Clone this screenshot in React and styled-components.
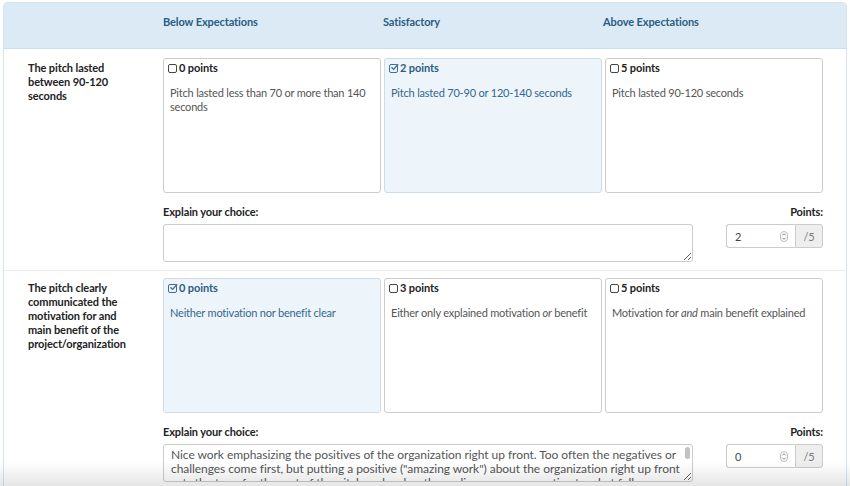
import React from "react";
import styled, { createGlobalStyle } from "styled-components";

const GlobalStyle = createGlobalStyle`
  html, body {
    margin: 0;
    padding: 0;
    background: #fff;
    overflow: hidden;
  }
  body {
    font-family: Lato, "Open Sans", sans-serif;
    font-size: 11px;
    letter-spacing: -0.2px;
    color: #333;
  }
`;

const Panel = styled.div`
  margin: 2px 3px 0 3px;
  border: 1px solid #d3e5f0;
  border-radius: 4px;
  background: #fff;
`;

const Header = styled.div`
  display: grid;
  grid-template-columns: 135px repeat(3, 1fr);
  column-gap: 3px;
  align-items: center;
  height: 45px;
  padding: 0 23px 0 24px;
  background: #dceaf5;
  border-bottom: 1px solid #c9dfec;
  border-radius: 3px 3px 0 0;
`;

const HeaderCell = styled.div`
  font-weight: 700;
  font-size: 11px;
  letter-spacing: -0.1px;
  color: #2b5d83;
  padding-bottom: 9px;
  margin-left: -3px;
`;

const Row = styled.div`
  display: grid;
  grid-template-columns: 135px 1fr;
  padding: ${(p) => (p.first ? "9px" : "7px")} 23px 8px 24px;
  border-bottom: ${(p) => (p.last ? "none" : "1px solid #e6ecf0")};
`;

const Criterion = styled.div`
  font-weight: 700;
  font-size: 11px;
  letter-spacing: -0.1px;
  line-height: 14px;
  color: #222;
  padding-top: 3px;
  max-width: 110px;
`;

const Options = styled.div`
  display: grid;
  grid-template-columns: repeat(3, 1fr);
  gap: 3px;
`;

const Card = styled.div`
  box-sizing: border-box;
  height: 135px;
  padding: 2px 6px 8px 3px;
  border: 1px solid ${(p) => (p.selected ? "#cddde8" : "#cccccc")};
  border-radius: 3px;
  background: ${(p) => (p.selected ? "#edf5fa" : "#fff")};
  color: ${(p) => (p.selected ? "#336791" : "#555")};
`;

const CardTitle = styled.div`
  display: flex;
  align-items: center;
  gap: 2px;
  padding-left: 1px;
  font-weight: 700;
  letter-spacing: -0.1px;
  line-height: 14px;
  color: ${(p) => (p.selected ? "#2b5d83" : "#222")};
`;

const Box = styled.span`
  display: inline-flex;
  box-sizing: border-box;
  width: 9px;
  height: 9px;
  border: 1px solid ${(p) => (p.checked ? "#3f6f96" : "#444")};
  border-radius: 2px;
  align-items: center;
  justify-content: center;
  overflow: visible;
`;

const CardText = styled.div`
  margin-top: 11px;
  padding-left: 3px;
  line-height: 14px;
`;

const Feedback = styled.div`
  display: grid;
  grid-template-columns: 1fr 97px;
  column-gap: 33px;
  margin-top: 12px;
`;

const FieldLabel = styled.div`
  font-weight: 700;
  letter-spacing: -0.1px;
  line-height: 14px;
  color: #222;
  margin-bottom: 5px;
  text-align: ${(p) => (p.right ? "right" : "left")};
`;

const CommentWrap = styled.div`
  position: relative;
`;

const Comment = styled.textarea`
  display: block;
  box-sizing: border-box;
  width: 100%;
  height: 38px;
  padding: 3px 10px 3px 7px;
  border: 1px solid #ccc;
  border-radius: 3px;
  font-family: Lato, "Open Sans", sans-serif;
  font-size: 12px;
  letter-spacing: -0.05px;
  line-height: 14px;
  color: #555;
  resize: vertical;
  overflow: hidden;
`;

const ScrollThumb = styled.span`
  position: absolute;
  top: 3px;
  right: 3px;
  width: 5px;
  height: 12px;
  border-radius: 3px;
  background: #c2c2c2;
  pointer-events: none;
`;

const InputGroup = styled.div`
  display: flex;
  height: 24px;
`;

const NumberBox = styled.div`
  flex: 1;
  display: flex;
  align-items: center;
  justify-content: space-between;
  padding: 0 7px 0 8px;
  border: 1px solid #ccc;
  border-right: none;
  border-radius: 3px 0 0 3px;
  color: #444;
`;

const Addon = styled.div`
  width: 28px;
  box-sizing: border-box;
  display: flex;
  align-items: center;
  justify-content: center;
  background: #eeeeee;
  border: 1px solid #ccc;
  border-radius: 0 3px 3px 0;
  color: #777;
`;

const BottomFade = styled.div`
  position: fixed;
  left: 0;
  right: 0;
  bottom: 0;
  height: 24px;
  background: linear-gradient(rgba(0, 0, 0, 0), rgba(0, 0, 0, 0.1));
  pointer-events: none;
`;

const Check = ({ checked }) => (
  <Box checked={checked}>
    {checked && (
      <svg width="9" height="9" viewBox="0 0 9 9" style={{ marginTop: -1, marginRight: -2 }}>
        <path d="M1.5 4.2 L3.6 6.4 L8.2 1.2" fill="none" stroke="#3f6f96" strokeWidth="1.3" />
      </svg>
    )}
  </Box>
);

const Spinner = () => (
  <svg width="8" height="11" viewBox="0 0 8 11">
    <rect x="0.5" y="0.5" width="7" height="10" rx="3.5" fill="none" stroke="#bbb" />
    <path d="M2.3 4.3 L4 2.6 L5.7 4.3 M2.3 6.7 L4 8.4 L5.7 6.7" fill="none" stroke="#777" strokeWidth="0.9" />
  </svg>
);

const criteria = [
  {
    label: "The pitch lasted between 90-120 seconds",
    selected: 1,
    options: [
      { points: 0, text: "Pitch lasted less than 70 or more than 140 seconds" },
      { points: 2, text: "Pitch lasted 70-90 or 120-140 seconds" },
      { points: 5, text: "Pitch lasted 90-120 seconds" },
    ],
    comment: "",
    score: 2,
  },
  {
    label: "The pitch clearly communicated the motivation for and main benefit of the project/organization",
    selected: 0,
    options: [
      { points: 0, text: "Neither motivation nor benefit clear" },
      {
        points: 3,
        text: (
          <>
            Either only explained motivation <em>or</em> benefit
          </>
        ),
      },
      {
        points: 5,
        text: (
          <>
            Motivation for <em>and</em> main benefit explained
          </>
        ),
      },
    ],
    comment:
      'Nice work emphasizing the positives of the organization right up front. Too often the negatives or challenges come first, but putting a positive ("amazing work") about the organization right up front sets the tone for the rest of the pitch and makes the audience more receptive to what follows.',
    score: 0,
  },
];

const App = () => {
  return (
    <>
      <GlobalStyle />
      <Panel>
        <Header>
          <div />
          <HeaderCell>Below Expectations</HeaderCell>
          <HeaderCell>Satisfactory</HeaderCell>
          <HeaderCell>Above Expectations</HeaderCell>
        </Header>
        {criteria.map((c, i) => (
          <Row key={i} first={i === 0} last={i === criteria.length - 1}>
            <Criterion>{c.label}</Criterion>
            <div>
              <Options>
                {c.options.map((o, j) => (
                  <Card key={j} selected={j === c.selected}>
                    <CardTitle selected={j === c.selected}>
                      <Check checked={j === c.selected} />
                      {o.points} points
                    </CardTitle>
                    <CardText>{o.text}</CardText>
                  </Card>
                ))}
              </Options>
              <Feedback>
                <div>
                  <FieldLabel>Explain your choice:</FieldLabel>
                  <CommentWrap>
                    <Comment defaultValue={c.comment} />
                    {c.comment && <ScrollThumb />}
                  </CommentWrap>
                </div>
                <div>
                  <FieldLabel right>Points:</FieldLabel>
                  <InputGroup>
                    <NumberBox>
                      <span>{c.score}</span>
                      <Spinner />
                    </NumberBox>
                    <Addon>/5</Addon>
                  </InputGroup>
                </div>
              </Feedback>
            </div>
          </Row>
        ))}
      </Panel>
      <BottomFade />
    </>
  );
};

export default App;
